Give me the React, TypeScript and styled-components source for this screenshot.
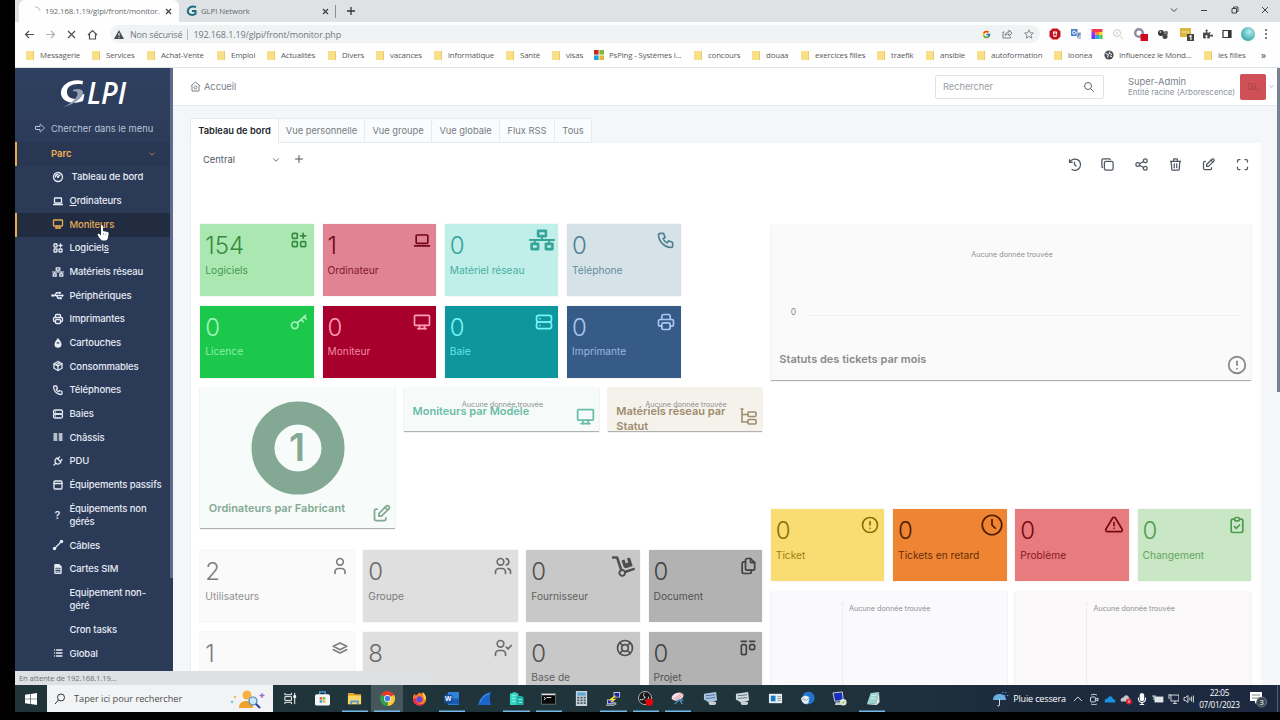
import React from "react";
import styled, { createGlobalStyle } from "styled-components";
import {
  TbAlertCircle,
  TbAlertTriangle,
  TbApps,
  TbArrowBigRight,
  TbChevronDown,
  TbClipboardCheck,
  TbClock,
  TbColumns,
  TbCopy,
  TbDeviceDesktop,
  TbDeviceLaptop,
  TbEdit,
  TbFiles,
  TbGauge,
  TbLayoutKanban,
  TbLayoutNavbar,
  TbLifebuoy,
  TbList,
  TbMaximize,
  TbPackage,
  TbPhone,
  TbPlug,
  TbPlus,
  TbPrinter,
  TbSearch,
  TbServer,
  TbShare,
  TbStack,
  TbTrash,
  TbUser,
  TbUsers,
} from "react-icons/tb";
import { FaDolly, FaNetworkWired, FaPuzzlePiece, FaSimCard, FaMicrophone } from "react-icons/fa";
import { FcGoogle } from "react-icons/fc";

const bookmarks = [
  { label: "Messagerie", w: 66 },
  { label: "Services", w: 55 },
  { label: "Achat-Vente", w: 70 },
  { label: "Emploi", w: 50 },
  { label: "Actualités", w: 61 },
  { label: "Divers", w: 48 },
  { label: "vacances", w: 58 },
  { label: "informatique", w: 72 },
  { label: "Santé", w: 46 },
  { label: "visas", w: 42 },
  { label: "PsPing - Systèmes i...", w: 100, kind: "ms" },
  { label: "concours", w: 58 },
  { label: "douaa", w: 49 },
  { label: "exercices filles", w: 76 },
  { label: "traefik", w: 49 },
  { label: "ansible", w: 51 },
  { label: "autoformation", w: 77 },
  { label: "loonea", w: 50 },
  { label: "Influencez le Mond...", w: 100, kind: "globe" },
  { label: "les filles", w: 57 },
];

const menu = [
  { label: "Tableau de bord", icon: <TbGauge />, wide: true },
  { label: "Ordinateurs", icon: <TbDeviceLaptop />, key: "O" },
  { label: "Moniteurs", icon: <TbDeviceDesktop />, active: true },
  { label: "Logiciels", icon: <TbApps /> },
  { label: "Matériels réseau", icon: <FaNetworkWired /> },
  { label: "Périphériques", icon: <UsbIcon /> },
  { label: "Imprimantes", icon: <TbPrinter /> },
  { label: "Cartouches", icon: <DropIcon /> },
  { label: "Consommables", icon: <TbPackage /> },
  { label: "Téléphones", icon: <TbPhone /> },
  { label: "Baies", icon: <TbServer /> },
  { label: "Châssis", icon: <TbColumns /> },
  { label: "PDU", icon: <TbPlug /> },
  { label: "Équipements passifs", icon: <TbLayoutNavbar /> },
  { label: "Équipements non gérés", icon: <b>?</b>, tall: true },
  { label: "Câbles", icon: <CableIcon /> },
  { label: "Cartes SIM", icon: <FaSimCard size={10} /> },
  { label: "Equipement non-géré", icon: null, tall: true },
  { label: "Cron tasks", icon: null },
  { label: "Global", icon: <TbList /> },
];

const tiles = [
  { n: "154", label: "Logiciels", c: 1, r: 1, w: 3, bg: "#abe8b1", fg: "#358a41", icon: <TbApps /> },
  { n: "1", label: "Ordinateur", c: 4, r: 1, w: 3, bg: "#e08392", fg: "#74061c", icon: <TbDeviceLaptop /> },
  { n: "0", label: "Matériel réseau", c: 7, r: 1, w: 3, bg: "#c0eee8", fg: "#36a597", icon: <FaNetworkWired />, big: 26, dx: 2 },
  { n: "0", label: "Téléphone", c: 10, r: 1, w: 3, bg: "#d5e3e8", fg: "#50808f", icon: <TbPhone /> },
  { n: "0", label: "Licence", c: 1, r: 3, w: 3, bg: "#1bc84c", fg: "#a5f5ba", icon: <KeyIcon /> },
  { n: "0", label: "Moniteur", c: 4, r: 3, w: 3, bg: "#a8002d", fg: "#ff9fb8", icon: <TbDeviceDesktop /> },
  { n: "0", label: "Baie", c: 7, r: 3, w: 3, bg: "#0d969c", fg: "#78f3f7", icon: <TbServer /> },
  { n: "0", label: "Imprimante", c: 10, r: 3, w: 3, bg: "#375b87", fg: "#a7c8f2", icon: <TbPrinter /> },
  { n: "2", label: "Utilisateurs", c: 1, r: 9, w: 4, bg: "#fafafa", fg: "#7d7d7d", icon: <TbUser /> },
  { n: "0", label: "Groupe", c: 5, r: 9, w: 4, bg: "#dfdfdf", fg: "#6b6b6b", icon: <TbUsers /> },
  { n: "0", label: "Fournisseur", c: 9, r: 9, w: 3, bg: "#c8c8c8", fg: "#4f4f4f", icon: <FaDolly />, big: 23, dx: 1.5 },
  { n: "0", label: "Document", c: 12, r: 9, w: 3, bg: "#b2b2b2", fg: "#424242", icon: <TbFiles /> },
  { n: "1", label: "", c: 1, r: 11, w: 4, bg: "#fafafa", fg: "#7d7d7d", icon: <TbStack /> },
  { n: "8", label: "", c: 5, r: 11, w: 4, bg: "#dfdfdf", fg: "#6b6b6b", icon: <UserCheckIcon /> },
  { n: "0", label: "Base de", c: 9, r: 11, w: 3, bg: "#c8c8c8", fg: "#4f4f4f", icon: <TbLifebuoy /> },
  { n: "0", label: "Projet", c: 12, r: 11, w: 3, bg: "#b2b2b2", fg: "#424242", icon: <TbLayoutKanban /> },
  { n: "0", label: "Ticket", c: 15, r: 8, w: 3, bg: "#f9dd73", fg: "#8b7000", icon: <TbAlertCircle /> },
  { n: "0", label: "Tickets en retard", c: 18, r: 8, w: 3, bg: "#ef8433", fg: "#4d1d00", icon: <TbClock />, big: 26 },
  { n: "0", label: "Problème", c: 21, r: 8, w: 3, bg: "#e77b7d", fg: "#760a11", icon: <TbAlertTriangle /> },
  { n: "0", label: "Changement", c: 24, r: 8, w: 3, bg: "#c9e7c5", fg: "#4f9b52", icon: <TbClipboardCheck /> },
];

const tasks = [
  { icon: <TaskView /> },
  { icon: <Store /> },
  { icon: <Explorer />, open: true },
  { icon: <Chrome />, open: true, active: true },
  { icon: <Firefox /> },
  { icon: <Word />, open: true },
  { icon: <Shark /> },
  { icon: <Towers />, open: true },
  { icon: <Cmd />, open: true },
  { icon: <Calc /> },
  { icon: <Putty />, open: true },
  { icon: <Obs />, open: true },
  { icon: <Snip />, open: true },
  { icon: <Monitor fill="#a9c4e0" /> },
  { icon: <Monitor fill="#d3dbd9" /> },
  { icon: <Card /> },
  { icon: <Bird /> },
  { icon: <Remote /> },
  { icon: <Notebook />, open: true },
];

export default function App() {
  return (
    <>
      <GlobalStyle />
      <Screen>
        <Desktop>
          <Browser />
          <Page>
            <Sidebar />
            <Main>
              <TopBar />
              <Dashboard />
            </Main>
            <PageScroll />
            <StatusBubble>En attente de 192.168.1.19...</StatusBubble>
          </Page>
          <Taskbar />
        </Desktop>
      </Screen>
    </>
  );
}

function Browser() {
  return (
    <Chromebar>
      <TabStrip>
        <Tab $active>
          <svg width="12" height="12" viewBox="0 0 12 12" fill="none" stroke="#b4b8bb">
            <path d="M5 2a5 5 0 0 1 5 4" />
          </svg>
          <TabTitle $w={114}>192.168.1.19/glpi/front/monitor.</TabTitle>
          <Cross />
        </Tab>
        <Tab>
          <svg width="12" height="12" viewBox="0 0 12 12" fill="none">
            <path d="M10 2C5 .5 1.500 3 1.800 6.500 2 9.500 6 11 9.500 9V6H6" stroke="#1e6c80" strokeWidth="2" />
          </svg>
          <TabTitle $w={115}>GLPI Network</TabTitle>
          <Cross />
        </Tab>
        <TabLine />
        <svg width="10" height="10" viewBox="0 0 10 10" stroke="#333" strokeWidth="1.300">
          <path d="M5 1v8M1 5h8" />
        </svg>
        <WindowButtons>
          <svg width="8" height="8" viewBox="0 0 8 8"><path d="M1 2.500l3 3 3-3" /></svg>
          <svg width="8" height="8" viewBox="0 0 8 8"><path d="M1 4.500h6" /></svg>
          <svg width="8" height="8" viewBox="0 0 8 8"><path d="M1 2.500h4.500V7H1zM2.500 2.500V1H7v4.500H5.500" /></svg>
          <svg width="8" height="8" viewBox="0 0 8 8"><path d="M1 1l6 6M7 1L1 7" /></svg>
        </WindowButtons>
      </TabStrip>
      <AddressRow>
        <NavButtons>
          <svg width="11" height="11" viewBox="0 0 11 11"><path d="M10 5.500H1.500M5 2L1.500 5.500 5 9" /></svg>
          <svg width="11" height="11" viewBox="0 0 11 11" opacity=".45"><path d="M1 5.500h8.500M6 2l3.500 3.500L6 9" /></svg>
          <svg width="11" height="11" viewBox="0 0 11 11"><path d="M2 2l7 7M9 2L2 9" /></svg>
          <svg width="11" height="11" viewBox="0 0 11 11"><path d="M1 6l4.500-4.500L10 6M2.500 5v5h6V5" /></svg>
        </NavButtons>
        <AddressBar>
          <svg width="10" height="9" viewBox="0 0 10 9"><path d="M5 0l5 9H0z" fill="#4a4d50" /><path d="M5 3v3M5 7v1" stroke="#fff" /></svg>
          <Insecure>Non sécurisé</Insecure>
          <Separator />
          <Url>192.168.1.19/glpi/front/monitor.php</Url>
          <AddressIcons>
            <FcGoogle size={9} />
            <svg width="11" height="10" viewBox="0 0 11 10"><path d="M2.500 3H1v6h7.500V7.500M3 6.500c.5-2.500 2-3.500 4-3.500V1l3 3-3 3V5c-2 0-3 .5-4 1.500z" /></svg>
            <svg width="10" height="10" viewBox="0 0 12 12"><path d="M6 1l1.500 3.500 3.800.3-2.900 2.500.9 3.700L6 9l-3.300 2 .9-3.700L.7 4.800l3.800-.3z" /></svg>
          </AddressIcons>
        </AddressBar>
        <Extensions />
      </AddressRow>
      <BookmarkBar>
        {bookmarks.map((b) => (
          <Bookmark key={b.label} $w={b.w}>
            {b.kind === "ms" ? (
              <svg width="10" height="10" viewBox="0 0 10 10">
                <path d="M0 0h4.600v4.600H0z" fill="#c8271e" /><path d="M5.400 0H10v4.600H5.400z" fill="#7fb93c" />
                <path d="M0 5.400h4.600V10H0z" fill="#23a0d8" /><path d="M5.400 5.400H10V10H5.400z" fill="#e3b93e" />
              </svg>
            ) : b.kind === "globe" ? (
              <svg width="10" height="10" viewBox="0 0 10 10">
                <circle cx="5" cy="5" r="4.600" fill="#4c4f52" />
                <path d="M1.500 3.500l3 1-1 3M6 1.500L5 3l3 1.500M6 6l2 .5" stroke="#fff" fill="none" />
              </svg>
            ) : (
              <Folder />
            )}
            <span>{b.label}</span>
          </Bookmark>
        ))}
        <More>»</More>
      </BookmarkBar>
    </Chromebar>
  );
}

function Extensions() {
  return (
    <ExtensionRow>
      <svg width="12" height="12" viewBox="0 0 12 12">
        <path d="M3.500 .5h5l3 3v5l-3 3h-5l-3-3v-5z" fill="#c3101c" />
        <path d="M4.500 6V3.500M6 6V3M7.500 6V3.500M4.500 6.500a1.500 2 0 0 0 3 0" stroke="#fff" strokeWidth="1.100" fill="none" />
      </svg>
      <svg width="12" height="12" viewBox="0 0 12 12">
        <path d="M1 1h6.500v7H1z" fill="#4b82d6" /><path d="M6 4h5v7H7.500z" fill="#b9c8de" />
        <circle cx="4" cy="4.500" r="1.500" fill="none" stroke="#fff" /><path d="M7.500 6h3M9 6c0 2-1 2.500-2 3" stroke="#476ba5" fill="none" />
      </svg>
      <svg width="12" height="12" viewBox="0 0 12 12">
        <path d="M.5 1h11v3H.5z" fill="#ec3d54" /><path d="M.5 4h4v3h-4z" fill="#b02ee0" /><path d="M4.500 4h4v3h-4z" fill="#ff8a1f" />
        <path d="M8.500 4h3v3h-3z" fill="#f6da20" /><path d="M.5 7h4v4h-4z" fill="#6540e8" /><path d="M4.500 7h4v4h-4z" fill="#28a9e8" /><path d="M8.500 7h3v4h-3z" fill="#4bc94c" />
      </svg>
      <svg width="12" height="12" viewBox="0 0 12 12" fill="none" stroke="#c9cbcc">
        <circle cx="5" cy="5" r="3.500" /><path d="M8 8l3 3M5 3.500v3" />
      </svg>
      <svg width="15" height="14" viewBox="0 0 15 14">
        <circle cx="6" cy="6" r="3.800" fill="none" stroke="#898ba3" strokeWidth="2.400" /><path d="M7.500 7H15v7H7.500z" fill="#d00b20" />
      </svg>
      <svg width="12" height="12" viewBox="0 0 12 12">
        <circle cx="4" cy="5" r="3" fill="#333" /><circle cx="9" cy="5" r="2.200" fill="#777" /><circle cx="8" cy="8.500" r="2.500" fill="#444" /><circle cx="3.500" cy="4" r="1" fill="#bbb" />
      </svg>
      <svg width="15" height="14" viewBox="0 0 15 14">
        <path d="M1 1h11v9H1z" fill="#dcb73f" /><path d="M3 5h7" stroke="#fff" strokeDasharray="1.500 1" /><rect x="8" y="7" width="7" height="7" fill="#444" />
        <text x="11.500" y="13" fontSize="7" fontWeight="700" fill="#fff" textAnchor="middle">1</text>
      </svg>
      <FaPuzzlePiece size={10} color="#4b4e51" />
      <svg width="10" height="10" viewBox="0 0 10 10"><path d="M1 1.500h8v7H1z" fill="none" stroke="#333" strokeWidth="1.200" /><path d="M6 1.500h3v7H6z" fill="#333" /></svg>
      <Profile />
      <svg width="4" height="12" viewBox="0 0 4 12" fill="#4b4e51"><circle cx="2" cy="2" r="1" /><circle cx="2" cy="6" r="1" /><circle cx="2" cy="10" r="1" /></svg>
    </ExtensionRow>
  );
}

function Sidebar() {
  return (
    <Side>
      <SideInner>
        <Logo viewBox="0 0 70 30">
          <path d="M24 2C12-1 1 6 2 15c1 8 12 11 22 7l1.500-7-4 1-1 3.500C14 21 8 19 8 13 8 7 14 4 23.500 5.500z" fill="#fff" />
          <path d="M14 11c5-2 10-1 10 2.500C24 19 15 25 4 28.500 13 24 19 18 18.500 14.500 18.300 12.500 16.500 12 14 12.500z" fill="#93a0b6" />
          <text x="28" y="24.500" textLength="39" lengthAdjust="spacingAndGlyphs">LPI</text>
        </Logo>
        <MenuSearch>
          <TbArrowBigRight size={12} />
          Chercher dans le menu
        </MenuSearch>
        <MenuHead>
          Parc
          <TbChevronDown size={8} />
        </MenuHead>
        {menu.map((m) => (
          <MenuItem key={m.label} $active={m.active} $tall={m.tall}>
            <MenuIcon $wide={m.wide}>{m.icon}</MenuIcon>
            <MenuLabel $wrap={m.tall}>
              {m.key ? <><u>{m.key}</u>{m.label.slice(1)}</> : m.label === "Logiciels" ? <>Logiciel<u>s</u></> : m.label}
            </MenuLabel>
            {m.active && (
              <Pointer viewBox="0 0 12 17">
                <path d="M4 1.500c.8-.8 2 0 2 1V7l4.500 1c1 .3 1.300 1 1.100 2l-.8 4c-.3 1.500-1 2.500-2.500 2.500H5.500C4 16.500 1.500 12.500.8 11c-.6-1.200.8-1.800 1.700-.9L4 11.500z" fill="#fff" />
                <path d="M6.500 9v2M8.500 9.500v2" stroke="#8a93a3" strokeWidth=".6" />
              </Pointer>
            )}
          </MenuItem>
        ))}
      </SideInner>
      <SideScroll />
    </Side>
  );
}

function TopBar() {
  return (
    <Header>
      <Crumb>
        <svg width="11" height="11" viewBox="0 0 11 11" fill="none" stroke="#7b828c">
          <path d="M.8 5l4.700-4 4.700 4M2 4.500V10h7V4.500" />
          <circle cx="5.500" cy="6.500" r="1.500" />
        </svg>
        Accueil
      </Crumb>
      <SearchBox>
        Rechercher
        <TbSearch size={12} />
      </SearchBox>
      <UserInfo>
        <UserName>Super-Admin</UserName>
        <UserEntity>Entité racine (Arborescence)</UserEntity>
      </UserInfo>
      <Avatar>GL</Avatar>
      <TbChevronDown size={7} />
    </Header>
  );
}

function Dashboard() {
  return (
    <Content>
      <Tabs>
        <PageTab $w={89} $active>Tableau de bord</PageTab>
        <PageTab $w={86}>Vue personnelle</PageTab>
        <PageTab $w={67}>Vue groupe</PageTab>
        <PageTab $w={68}>Vue globale</PageTab>
        <PageTab $w={55}>Flux RSS</PageTab>
        <PageTab $w={37}>Tous</PageTab>
      </Tabs>
      <Panel>
        <Toolbar>
          <Select>
            Central
            <TbChevronDown size={10} />
          </Select>
          <TbPlus size={12} />
          <Tools>
            <HistoryIcon />
            <TbCopy />
            <TbShare />
            <TbTrash />
            <TbEdit />
            <TbMaximize />
          </Tools>
        </Toolbar>
        <Grid>
          {tiles.map((t) => (
            <Tile key={t.c + "-" + t.r} $c={t.c} $r={t.r} $w={t.w} $bg={t.bg} $fg={t.fg}>
              <TileNumber>{t.n}</TileNumber>
              <TileLabel>{t.label}</TileLabel>
              <TileIcon $size={t.big || 20} $dx={t.dx || 0}>{t.icon}</TileIcon>
            </Tile>
          ))}
          <Widget $c={15} $r={1} $w={12} $h={156} $bg="#fafafa" $fg="#8a8a8a">
            <NoData $top={26}>Aucune donnée trouvée</NoData>
            <Axis><span>0</span><i /></Axis>
            <WidgetTitle $bottom={13}>Statuts des tickets par mois</WidgetTitle>
            <WidgetIcon $size={22}><TbAlertCircle /></WidgetIcon>
          </Widget>
          <Widget $c={1} $r={5} $w={5} $h={141} $bg="#f7fbf9" $fg="#83a994">
            <Donut viewBox="0 0 94 94">
              <circle cx="47" cy="47" r="35" fill="none" stroke="#83a994" strokeWidth="23" />
              <text x="46" y="60" textAnchor="middle">1</text>
            </Donut>
            <WidgetTitle $bottom={12}>Ordinateurs par Fabricant</WidgetTitle>
            <WidgetIcon $size={21}><TbEdit /></WidgetIcon>
          </Widget>
          <Widget $c={6} $r={5} $w={5} $h={44} $bg="#f6fbf9" $fg="#6abda6">
            <NoData $top={13}>Aucune donnée trouvée</NoData>
            <WidgetTitle $bottom={12.5}>Moniteurs par Modèle</WidgetTitle>
            <WidgetIcon $size={21}><TbDeviceDesktop /></WidgetIcon>
          </Widget>
          <Widget $c={11} $r={5} $w={4} $h={44} $bg="#f5f2ec" $fg="#9d8b6c">
            <NoData $top={13}>Aucune donnée trouvée</NoData>
            <WidgetTitle $bottom={-2.5}>Matériels réseau par Statut</WidgetTitle>
            <WidgetIcon $size={20}>
              <svg width="20" height="20" viewBox="0 0 20 20" fill="none" stroke="currentColor" strokeWidth="1.600">
                <path d="M1.500 2h3M3 2v13h6M3 7.500h6" />
                <rect x="9" y="5" width="8" height="4.500" rx="1" /><rect x="9" y="12.500" width="8" height="4.500" rx="1" />
              </svg>
            </WidgetIcon>
          </Widget>
          <Widget $c={15} $r={10} $w={6} $h={140} $bg="#fafafc" $fg="#8a8a8a">
            <NoData $top={13}>Aucune donnée trouvée</NoData>
            <DottedLine />
          </Widget>
          <Widget $c={21} $r={10} $w={6} $h={140} $bg="#faf8f9" $fg="#8a8a8a">
            <NoData $top={13}>Aucune donnée trouvée</NoData>
            <DottedLine />
          </Widget>
        </Grid>
      </Panel>
    </Content>
  );
}

function Taskbar() {
  return (
    <Bar>
      <Start>
        <svg width="12" height="12" viewBox="0 0 12 12" fill="#fff"><path d="M0 1.700l5-.7v4.700H0zM5.600.9L12 0v5.700H5.600zM0 6.300h5V11l-5-.7zM5.600 6.300H12V12l-6.400-.9z" /></svg>
      </Start>
      <TaskSearch>
        <svg width="12" height="12" viewBox="0 0 12 12" fill="none" stroke="#333"><circle cx="7" cy="4.500" r="3.500" /><path d="M4.500 7L1 11" /></svg>
        Taper ici pour rechercher
        <svg width="36" height="20" viewBox="0 0 36 20">
          <path d="M9 19c0-5 3-7 7-7s7 2 7 7z" fill="#f0a12c" /><circle cx="17" cy="6" r="4.500" fill="#f5b041" />
          <circle cx="23" cy="12" r="4" fill="#c7e8fb" stroke="#4a86c5" strokeWidth="1.200" /><path d="M26 15l4 4" stroke="#2b3f9c" strokeWidth="2" />
          <path d="M32 4v5M29.500 6.500h5" stroke="#9b6bd6" strokeWidth="1.300" /><circle cx="5" cy="8" r="1" fill="#f0a12c" /><circle cx="2" cy="13" r="1.300" fill="#60c5f0" />
        </svg>
      </TaskSearch>
      <TaskList>
        {tasks.map((t, i) => (
          <Task key={i} $open={t.open} $active={t.active}>{t.icon}</Task>
        ))}
      </TaskList>
      <Tray>
        <svg width="17" height="16" viewBox="0 0 17 16">
          <path d="M1 9c0-4 3-6 6.500-6S14 5 14 9z" fill="#6aaee0" /><path d="M7.500 8v6c0 1.500-2 1.500-2 0" stroke="#d0dde6" fill="none" />
          <path d="M11 1l-.5 1M14 1l-.5 1M13 4l-.5 1M16 4l-.5 1" stroke="#57a8ef" strokeWidth="1.200" />
        </svg>
        <Weather>Pluie cessera</Weather>
        <TrayIcons>
          <svg viewBox="0 0 12 12"><path d="M2 8l4-4 4 4" /></svg>
          <svg viewBox="0 0 12 12"><rect x="2.500" y="4" width="5" height="5" rx="1" /><path d="M8 6l2-1v3L8 7M3 2c2-1 4-1 6 0M3 11c2 1 4 1 6 0" /></svg>
          <svg viewBox="0 0 12 12"><path d="M1 9.500c-1-3 1-4 2.500-4C5 2 9 3 9 6c3 0 3 3 2 3.500z" fill="#1c8fdf" stroke="none" /></svg>
          <svg viewBox="0 0 12 12"><path d="M1 8.500c-1-3 1-4 2.500-4C5 1 9 2 9 5c2 0 2 3 1 3.500z" fill="#c5c9cd" stroke="none" /><circle cx="9" cy="8.500" r="3" fill="#d92532" stroke="none" /><path d="M8 7.500l2 2M10 7.500l-2 2" strokeWidth=".7" /></svg>
          <FaMicrophone />
          <svg viewBox="0 0 12 12"><rect x="3" y="4" width="8" height="5" fill="#dfe4e8" /><path d="M0 3h4M2 3v4" /></svg>
          <svg viewBox="0 0 12 12"><rect x="3" y="2" width="8" height="6" /><path d="M7 8v2M5 10.500h4M1 1v5M1 2h2" /></svg>
          <svg viewBox="0 0 12 12"><path d="M1 4.500h1.500L5 2.500v7L2.500 7.500H1zM7 4.500v3M8.700 3.500v5M10.500 2.500v7" /></svg>
        </TrayIcons>
        <Clock>
          <span>22:05</span>
          <span>07/01/2023</span>
        </Clock>
        <Notif>
          <svg width="18" height="18" viewBox="0 0 18 18">
            <path d="M1 2h12v9H8l-2 3v-3H1z" fill="#fff" /><path d="M3 5h8M3 8h8" stroke="#7b8894" />
            <circle cx="12.500" cy="12" r="5" fill="#3b4752" stroke="#9da6ad" strokeWidth=".6" />
            <text x="12.500" y="15" fontSize="8" fill="#fff" textAnchor="middle">3</text>
          </svg>
        </Notif>
        <ShowDesktop />
      </Tray>
    </Bar>
  );
}

function Cross() {
  return <svg width="7" height="7" viewBox="0 0 7 7" stroke="#3b3e41" strokeWidth="1.200"><path d="M1 1l5 5M6 1L1 6" /></svg>;
}

function UsbIcon() {
  return (
    <svg width="13" height="13" viewBox="0 0 24 24">
      <path d="M3 12h18M7 12l3-5h4M10 12l3 5h4" fill="none" stroke="currentColor" />
      <circle cx="3" cy="12" r="2.500" fill="currentColor" />
      <path d="M20 9l4 3-4 3zM14 5h4v4h-4zM16 15h4v4h-4z" fill="currentColor" />
    </svg>
  );
}

function DropIcon() {
  return (
    <svg width="12" height="12" viewBox="0 0 24 24">
      <path d="M12 2c-4 5-7 8-7 12.500a7 7 0 0 0 14 0C19 10 16 7 12 2z" fill="currentColor" />
      <path d="M9 13a3 3 0 0 1 6 0z" fill="#2b3a56" />
    </svg>
  );
}

function CableIcon() {
  return (
    <svg width="12" height="12" viewBox="0 0 24 24" fill="currentColor">
      <circle cx="5" cy="19" r="3.500" /><circle cx="19" cy="5" r="3.500" />
      <path d="M5 19L19 5" stroke="currentColor" />
    </svg>
  );
}

function HistoryIcon() {
  return (
    <svg width="15" height="15" viewBox="0 0 24 24" fill="none" stroke="currentColor" strokeWidth="2" strokeLinecap="round" strokeLinejoin="round">
      <path d="M4 4v4.500h4.500M4.500 8.500A9 9 0 1 1 8 20M12 8v4l2.500 2.500" />
    </svg>
  );
}

function KeyIcon() {
  return (
    <svg width="20" height="20" viewBox="0 0 24 24" fill="none" stroke="currentColor" strokeWidth="2" strokeLinecap="round" strokeLinejoin="round">
      <circle cx="7" cy="16" r="4" />
      <path d="M10 13L20 4M18 5.800l2.500 2.500M14.500 9l2.500 2.500" />
    </svg>
  );
}

function UserCheckIcon() {
  return (
    <svg width="20" height="20" viewBox="0 0 24 24" fill="none" stroke="currentColor" strokeWidth="2" strokeLinecap="round" strokeLinejoin="round">
      <circle cx="9" cy="7" r="4" />
      <path d="M3 21v-2a4 4 0 0 1 4-4h4a4 4 0 0 1 4 4v2M16 11l2 2 4-4" />
    </svg>
  );
}

function TaskView() {
  return <svg viewBox="0 0 16 16" fill="none" stroke="#fff"><path d="M2 2v2h7V2M2 14v-2h7v2M2 6h7v4H2zM12.500 2v12" /><path d="M11.500 5h2v2h-2z" fill="#fff" /></svg>;
}
function Store() {
  return (
    <svg viewBox="0 0 16 16">
      <path d="M5 4V1h6v3" fill="none" stroke="#4ba9e8" strokeWidth="1.300" /><rect y="3.500" width="16" height="12" rx="2" fill="#f3f5f6" />
      <path d="M5 6.500h2.700v2.700H5z" fill="#e35b32" /><path d="M8.300 6.500H11v2.700H8.300z" fill="#78b63b" /><path d="M5 9.800h2.700v2.700H5z" fill="#2fa2df" /><path d="M8.300 9.800H11v2.700H8.300z" fill="#efb52e" />
    </svg>
  );
}
function Explorer() {
  return <svg viewBox="0 0 16 16"><path d="M1 2h6l1.500 1.500H15V14H1z" fill="#e2a32c" /><path d="M1 5h14v9H1z" fill="#fbd568" /><path d="M3.500 14v-4h9v4h-2v-2h-5v2z" fill="#4d9ed8" /></svg>;
}
function Chrome() {
  return (
    <svg viewBox="0 0 16 16">
      <path d="M8 8L1.070 4A8 8 0 0 1 14.930 4z" fill="#e33b2e" /><path d="M8 8l6.930-4A8 8 0 0 1 8 16z" fill="#fcc934" /><path d="M8 8v8A8 8 0 0 1 1.070 4z" fill="#2da14c" />
      <circle cx="8" cy="8" r="3.800" fill="#fff" /><circle cx="8" cy="8" r="3" fill="#3f7fe8" />
    </svg>
  );
}
function Firefox() {
  return (
    <svg viewBox="0 0 16 16">
      <path d="M8 15.500A7 7 0 0 1 1 8c0-2 .8-4 2-5l1 2 4-3.500C9 3 10 3 11 2c3 2 4 4 4 6.500a7 7 0 0 1-7 7z" fill="#ff7a22" />
      <path d="M11 1c3 2 4.500 5 3.500 9-2-1-2.500-5-3.500-9z" fill="#ffd43b" /><circle cx="8" cy="9" r="3.300" fill="#6c45d8" /><path d="M1 8c0 5 4 7.500 7 7.500 2 0 4-1 5-2-6 1.500-9-1-9-6z" fill="#ec2d55" />
    </svg>
  );
}
function Word() {
  return <svg viewBox="0 0 16 16"><rect x="4" y="1" width="12" height="14" rx="1" fill="#2f83d8" /><path d="M4 8h12v6H4z" fill="#1c5bb5" /><rect y="4" width="9" height="8.500" rx="1" fill="#164da3" /><text x="4.500" y="10.800" fontSize="7" fontWeight="700" fill="#fff" textAnchor="middle">W</text></svg>;
}
function Shark() {
  return <svg viewBox="0 0 16 16"><path d="M1 15C3 7 8 2 15 1c-2 5-1.500 9 0 14z" fill="#1d65cc" /><path d="M3 12C6 6 9 4 13 3" stroke="#5f9ff0" fill="none" /></svg>;
}
function Towers() {
  return <svg viewBox="0 0 16 16"><path d="M1 3l5-2 4 2v12H1z" fill="#35d4c3" /><path d="M8 6l4-1 3.500 1.500V15H8z" fill="#1fb3a6" /><path d="M3 5h4M3 8h4M3 11h4M10 9h4M10 12h4" stroke="#b6fff4" strokeWidth=".8" /></svg>;
}
function Cmd() {
  return <svg viewBox="0 0 16 16"><rect x=".5" y="2.500" width="15" height="11.500" fill="#070707" stroke="#8b8f91" strokeWidth=".7" /><path d="M1 3h14v1.500H1z" fill="#dfe3e5" /><path d="M3 6.500l2 1.500-2 1.500M6 7h5" stroke="#eee" fill="none" /></svg>;
}
function Calc() {
  return <svg viewBox="0 0 16 16"><rect x="2" y="0" width="12" height="16" fill="#c9d4dc" /><path d="M3.500 1.500h9V5h-9z" fill="#5daad6" /><path d="M3.500 7h9M3.500 10h9M3.500 13h9" stroke="#4c5a66" strokeWidth="1.800" strokeDasharray="2.200 1.200" /></svg>;
}
function Putty() {
  return <svg viewBox="0 0 16 16"><path d="M8 1h7v6H8zM1 9h7v5H1z" fill="#c4cbd0" /><path d="M9 2h5v4H9zM2 10h5v3H2z" fill="#1c1fb5" /><path d="M7 15h4v-3H8zM0 14.500h9V16H0z" fill="#9aa2a6" /><path d="M10 5L5 9h4l-4 3" stroke="#ffe22e" strokeWidth="1.400" fill="none" /></svg>;
}
function Obs() {
  return <svg viewBox="0 0 16 16"><circle cx="7.500" cy="7.500" r="7" fill="#171717" stroke="#b7b7b7" /><path d="M7 2c-2 2-1 4 1 5M2 9c3 1 5 0 5-3M11 6c1 2-1 4-3 4" stroke="#ddd" fill="none" /><circle cx="12" cy="12" r="4" fill="#e3060f" /></svg>;
}
function Snip() {
  return <svg viewBox="0 0 16 16"><ellipse cx="7" cy="6" rx="6.500" ry="4" fill="#f3dfe3" transform="rotate(-18 7 6)" /><path d="M3 9L12 2M5 10l8-6" stroke="#d96d7d" strokeWidth=".7" /><path d="M9 9l-5 5M9 9l3 5M13 9l-3 2" stroke="#4a8fc2" strokeWidth="1.500" /></svg>;
}
function Monitor({ fill }: { fill: string }) {
  return <svg viewBox="0 0 16 16"><path d="M1 3l13-2 1 9-9 2-5-3z" fill={fill} /><path d="M3 5l10-1M3 8l10-1" stroke="#52718f" /><ellipse cx="10" cy="13" rx="4" ry="2" fill="#c8d0d4" /></svg>;
}
function Card() {
  return <svg viewBox="0 0 16 16"><rect x="1" y="3" width="14" height="10" fill="#e9eef1" /><path d="M3 5h5v6H3z" fill="#1878c9" /><path d="M10 6h4M10 8h4M10 10h4" stroke="#8b9ba6" /></svg>;
}
function Bird() {
  return <svg viewBox="0 0 16 16"><path d="M3 4c3-5 12-4 12.500 3 .5 7-8 9-12 6z" fill="#2376cf" /><path d="M1 8c2-3 6-4 9-1l-1 6c-4 2-7 0-8-5z" fill="#e5edf3" /><path d="M2 8l5 2 3-3" stroke="#8ba5ba" fill="none" /></svg>;
}
function Remote() {
  return <svg viewBox="0 0 16 16"><path d="M1 2l10-1 1 9-9 1z" fill="#1a2fbd" stroke="#ccd3d8" /><path d="M4 12h6l2 3H3z" fill="#c5cbd0" /><circle cx="12" cy="12" r="3.500" fill="#e1ead6" /><path d="M10.500 12l1 1 2-2" stroke="#7f9d35" fill="none" /></svg>;
}
function Notebook() {
  return <svg viewBox="0 0 16 16"><path d="M6 2l9-1-3 12-10 1z" fill="#9bd4d0" /><path d="M2 14l10-1 3-12 .5 11-3 3z" fill="#e6ecec" /><path d="M7 5l5-.5M6 8l5-.5" stroke="#d9f2f0" /></svg>;
}

const GlobalStyle = createGlobalStyle`
  * {
    box-sizing: border-box;
  }
  body {
    margin: 0;
    background: #000;
    overflow: hidden;
  }
  svg {
    flex-shrink: 0;
  }
`;

const Screen = styled.div`
  width: 1280px;
  height: 720px;
  padding: 0 0 8px 15px;
  background: #000;
`;

const Desktop = styled.div`
  height: 712px;
  display: flex;
  flex-direction: column;
  overflow: hidden;
`;

const Chromebar = styled.div`
  height: 68px;
  flex-shrink: 0;
  font-family: "Open Sans", sans-serif;
  background: #fefefe;
  border-bottom: 1px solid #dfe2e3;
`;

const TabStrip = styled.div`
  height: 22px;
  display: flex;
  align-items: center;
  padding-left: 4px;
  background: #dee2e5;
`;

const Tab = styled.div<{ $active?: boolean }>`
  width: ${(p) => (p.$active ? 160 : 156)}px;
  height: 22px;
  display: flex;
  align-items: center;
  padding-left: ${(p) => (p.$active ? 11 : 7)}px;
  border-radius: 6px 6px 0 0;
  background: ${(p) => (p.$active ? "#fefefe" : "transparent")};
`;

const TabTitle = styled.span<{ $w: number }>`
  width: ${(p) => p.$w}px;
  margin: 0 6px 0 3px;
  white-space: nowrap;
  font-size: 7.800px;
  letter-spacing: -0.080px;
  color: #65696d;
`;

const TabLine = styled.div`
  width: 1px;
  height: 13px;
  margin-right: 10px;
  background: #8b8f92;
`;

const WindowButtons = styled.div`
  display: flex;
  gap: 22.500px;
  margin: -3px 11px 0 auto;
  fill: none;
  stroke: #404346;
  svg {
    display: block;
  }
`;

const AddressRow = styled.div`
  height: 22px;
  display: flex;
  align-items: center;
  padding: 2px 0 0 9px;
`;

const NavButtons = styled.div`
  width: 86px;
  display: flex;
  gap: 10px;
  fill: none;
  stroke: #4c5053;
  stroke-width: 1.200;
`;

const AddressBar = styled.div`
  width: 930px;
  height: 18px;
  display: flex;
  align-items: center;
  padding: 0 6px 0 4px;
  border-radius: 9px;
  background: #f0f3f4;
  font-size: 9px;
`;

const Insecure = styled.span`
  width: 56.500px;
  margin-left: 6px;
  letter-spacing: -0.180px;
  color: #74787b;
  white-space: nowrap;
`;

const Separator = styled.div`
  width: 1px;
  height: 11px;
  margin-right: 6px;
  background: #b7bbbd;
`;

const Url = styled.span`
  color: #73777a;
  letter-spacing: -0.120px;
`;

const AddressIcons = styled.div`
  display: flex;
  align-items: center;
  gap: 11px;
  margin-left: auto;
  fill: none;
  stroke: #5b5f62;
  stroke-width: 0.800;
  svg:first-child {
    stroke: none;
  }
`;

const ExtensionRow = styled.div`
  flex: 1;
  display: flex;
  align-items: center;
  justify-content: space-between;
  padding: 0 12px 0 9px;
`;

const Profile = styled.div`
  width: 14px;
  height: 14px;
  border-radius: 50%;
  background: radial-gradient(circle at 60% 35%, #b9eeee, #4fb5b8 60%, #2a858c);
`;

const BookmarkBar = styled.div`
  height: 22px;
  display: flex;
  align-items: center;
  padding-left: 11px;
`;

const Bookmark = styled.div<{ $w: number }>`
  width: ${(p) => p.$w}px;
  flex-shrink: 0;
  display: flex;
  align-items: center;
  gap: 5px;
  font-size: 7.800px;
  letter-spacing: -0.120px;
  color: #56595c;
  white-space: nowrap;
`;

const Folder = styled.i`
  width: 8px;
  height: 9px;
  background: #f9df88;
  border-right: 1px solid #ecca66;
  margin-right: 1px;
`;

const More = styled.span`
  font-size: 10px;
  color: #444;
`;

const Page = styled.div`
  position: relative;
  height: 617px;
  flex-shrink: 0;
  display: flex;
  overflow: hidden;
  background: #f4f6fa;
  font-family: Inter, sans-serif;
`;

const Side = styled.div`
  width: 158px;
  flex-shrink: 0;
  display: flex;
  background: linear-gradient(#2f4060, #2b3a57 90px);
`;

const SideInner = styled.div`
  width: 155px;
`;

const SideScroll = styled.div`
  width: 3px;
  height: 510px;
  background: #5d6c8c;
`;

const Logo = styled.svg`
  display: block;
  width: 70px;
  height: 30px;
  margin: 11px 0 0 43.500px;
  text {
    font: italic 600 31px "Open Sans", sans-serif;
    fill: #fff;
  }
`;

const MenuSearch = styled.div`
  height: 32.500px;
  display: flex;
  align-items: center;
  gap: 5px;
  padding: 6px 0 0 19px;
  font-size: 9.300px;
  color: #b9c4d8;
  white-space: nowrap;
`;

const MenuHead = styled.div`
  height: 24px;
  display: flex;
  align-items: center;
  justify-content: space-between;
  padding: 0 14px 0 34px;
  border-left: 2px solid #eda942;
  background: #293752;
  font-size: 9.500px;
  font-weight: 600;
  color: #f0b052;
`;

const MenuItem = styled.div<{ $active?: boolean; $tall?: boolean }>`
  position: relative;
  height: ${(p) => (p.$tall ? 36.8 : 23.7)}px;
  display: flex;
  align-items: center;
  padding: 0 0 1px 34px;
  border-left: 2px solid ${(p) => (p.$active ? "#eda942" : "transparent")};
  background: ${(p) => (p.$active ? "#212c41" : "transparent")};
  color: ${(p) => (p.$active ? "#e5aa55" : "#e6ebf5")};
`;

const MenuIcon = styled.span<{ $wide?: boolean }>`
  width: 13px;
  margin-right: ${(p) => (p.$wide ? 7.5 : 5.5)}px;
  display: flex;
  justify-content: center;
  font-size: 12px;
  svg {
    stroke-width: 2.600;
  }
  b {
    font-size: 10px;
    font-weight: 600;
  }
`;

const MenuLabel = styled.span<{ $wrap?: boolean }>`
  width: 90px;
  font-size: 9.500px;
  font-weight: 500;
  line-height: 13.200px;
  letter-spacing: -0.120px;
  white-space: ${(p) => (p.$wrap ? "normal" : "nowrap")};
`;

const Pointer = styled.svg`
  position: absolute;
  left: 80px;
  top: 11px;
  width: 12px;
  height: 17px;
  z-index: 2;
`;

const Main = styled.div`
  width: 1104px;
  display: flex;
  flex-direction: column;
`;

const Header = styled.div`
  height: 38px;
  flex-shrink: 0;
  display: flex;
  align-items: center;
  padding-left: 17px;
  background: #fff;
  border-bottom: 1px solid #e6eaee;
  color: #7b828c;
`;

const Crumb = styled.div`
  width: 745px;
  display: flex;
  align-items: center;
  gap: 3px;
  font-size: 9.300px;
  letter-spacing: -0.050px;
`;

const SearchBox = styled.div`
  width: 169px;
  height: 24px;
  display: flex;
  align-items: center;
  justify-content: space-between;
  padding: 0 8px 0 7px;
  border: 1px solid #dfe2e6;
  border-radius: 2px;
  font-size: 9.300px;
  letter-spacing: -0.050px;
  color: #9a9fa6;
  svg {
    color: #5f6670;
  }
`;

const UserInfo = styled.div`
  width: 112px;
  margin-left: 24px;
  white-space: nowrap;
`;

const UserName = styled.div`
  font-size: 9.400px;
  line-height: 11px;
`;

const UserEntity = styled.div`
  font-size: 8px;
  line-height: 11px;
  letter-spacing: -0.040px;
  color: #8d939b;
`;

const Avatar = styled.div`
  width: 26px;
  height: 26px;
  margin-right: 2px;
  border-radius: 2px;
  background: #d05058;
  color: #a84049;
  font-size: 9px;
  line-height: 26px;
  text-align: center;
`;

const PageScroll = styled.div`
  width: 3px;
  height: 324px;
  background: #79828f;
`;

const Content = styled.div`
  padding: 12px 0 0 17px;
`;

const Tabs = styled.div`
  display: flex;
  height: 25px;
`;

const PageTab = styled.div<{ $w: number; $active?: boolean }>`
  width: ${(p) => p.$w}px;
  height: ${(p) => (p.$active ? 26 : 25)}px;
  border: 1px solid #e8eaee;
  border-left-width: ${(p) => (p.$active ? 1 : 0)}px;
  border-bottom-color: ${(p) => (p.$active ? "#fff" : "#e8eaee")};
  background: ${(p) => (p.$active ? "#fff" : "#fafbfc")};
  color: ${(p) => (p.$active ? "#23272e" : "#757b84")};
  font-size: 9.300px;
  font-weight: ${(p) => (p.$active ? 600 : 400)};
  line-height: 23px;
  text-align: center;
  white-space: nowrap;
`;

const Panel = styled.div`
  width: 1071px;
  height: 600px;
  padding: 0 0 0 10px;
  background: #fff;
  border-left: 1px solid #e9ecf0;
`;

const Toolbar = styled.div`
  height: 81px;
  display: flex;
  align-items: flex-start;
  padding: 10px 11px 0 2px;
  color: #4f5763;
`;

const Select = styled.div`
  width: 78px;
  height: 13px;
  display: flex;
  align-items: center;
  justify-content: space-between;
  margin-right: 12px;
  font-size: 9.400px;
`;

const Tools = styled.div`
  display: flex;
  gap: 18.700px;
  margin: 4px 0 0 auto;
  font-size: 15px;
`;

const Grid = styled.div`
  margin-left: -0.700px;
  display: grid;
  grid-template-columns: repeat(26, 32px);
  grid-auto-rows: 32px;
  gap: 8.750px;
`;

const Tile = styled.div<{ $c: number; $r: number; $w: number; $bg: string; $fg: string }>`
  position: relative;
  grid-column: ${(p) => p.$c} / span ${(p) => p.$w};
  grid-row: ${(p) => p.$r} / span 2;
  height: 72px;
  padding: 9px 5px;
  background: ${(p) => p.$bg};
  color: ${(p) => p.$fg};
  box-shadow: 0 0 1px rgba(35, 46, 60, 0.2);
`;

const TileNumber = styled.div`
  font-size: 24px;
  font-weight: 300;
  line-height: 25px;
`;

const TileLabel = styled.div`
  margin-top: 4.500px;
  font-size: 10.200px;
  line-height: 14px;
  opacity: 0.85;
`;

const TileIcon = styled.span<{ $size: number; $dx: number }>`
  position: absolute;
  top: ${(p) => 16 - p.$size / 2}px;
  right: ${(p) => 14.5 + p.$dx - p.$size / 2}px;
  font-size: ${(p) => p.$size}px;
  line-height: 0;
  svg {
    stroke-width: ${(p) => (p.$size > 25 && p.$dx === 0 ? 1.6 : undefined)};
  }
`;

const Widget = styled.div<{ $c: number; $r: number; $w: number; $h: number; $bg: string; $fg: string }>`
  position: relative;
  grid-column: ${(p) => p.$c} / span ${(p) => p.$w};
  grid-row: ${(p) => p.$r};
  height: ${(p) => p.$h}px;
  background: ${(p) => p.$bg};
  color: ${(p) => p.$fg};
  box-shadow: 0 1px 1px rgba(0, 0, 0, 0.3);
`;

const WidgetTitle = styled.div<{ $bottom: number }>`
  position: absolute;
  left: 8.500px;
  bottom: ${(p) => p.$bottom}px;
  max-width: calc(100% - 36px);
  font-size: 11px;
  font-weight: 600;
  line-height: 15px;
`;

const WidgetIcon = styled.span<{ $size: number }>`
  position: absolute;
  right: 3.500px;
  bottom: 4.500px;
  font-size: ${(p) => p.$size}px;
  line-height: 0;
`;

const NoData = styled.div<{ $top: number }>`
  padding: ${(p) => p.$top}px 0 0 2px;
  font-size: 7.200px;
  line-height: 9px;
  text-align: center;
  color: #8d9092;
`;

const Axis = styled.div`
  display: flex;
  align-items: center;
  margin: 48px 12px 0 20px;
  font-size: 8.500px;
  i {
    flex: 1;
    margin: 7px 0 0 12px;
    border-top: 1px dotted #e8e8e8;
  }
`;

const DottedLine = styled.div`
  height: 84px;
  margin: -10px 0 0 71px;
  border-left: 1px dotted #e1e1e3;
`;

const Donut = styled.svg`
  display: block;
  width: 94px;
  height: 108px;
  padding-top: 14px;
  margin-left: 51px;
  text {
    font: 600 38px Inter, sans-serif;
    fill: #83a994;
  }
`;

const StatusBubble = styled.div`
  position: absolute;
  left: 0;
  bottom: 0;
  width: 417px;
  height: 14px;
  padding-left: 4px;
  background: #dee1e4;
  color: #6c7073;
  font: 7.600px/14px "Open Sans", sans-serif;
  letter-spacing: -0.100px;
`;

const Bar = styled.div`
  height: 27px;
  flex-shrink: 0;
  display: flex;
  background: linear-gradient(90deg, #20343a, #1f343b 60%, #1d2b3e 80%, #1c2940);
  font-family: "Open Sans", sans-serif;
`;

const Start = styled.div`
  width: 32px;
  flex-shrink: 0;
  display: flex;
  align-items: center;
  justify-content: center;
`;

const TaskSearch = styled.div`
  width: 226px;
  flex-shrink: 0;
  display: flex;
  align-items: center;
  gap: 8px;
  padding: 0 7px;
  background: #f2f3f4;
  font-size: 9.200px;
  color: #4d5052;
  white-space: nowrap;
  svg:last-child {
    margin-left: auto;
  }
`;

const TaskList = styled.div`
  display: flex;
  flex-shrink: 0;
  padding-left: 1px;
`;

const Task = styled.div<{ $open?: boolean; $active?: boolean }>`
  width: 32.330px;
  display: flex;
  align-items: center;
  justify-content: center;
  border-left: 3px solid transparent;
  border-right: 3px solid transparent;
  background: ${(p) => (p.$active ? "#46575c" : "transparent")};
  box-shadow: ${(p) => (p.$open ? "inset 0 -1.500px #76b9e8" : "none")};
  svg {
    width: 15px;
    height: 15px;
  }
`;

const Tray = styled.div`
  flex: 1;
  display: flex;
  align-items: center;
  padding-left: 104px;
  color: #fff;
`;

const Weather = styled.span`
  width: 59px;
  margin-left: 4px;
  font-size: 9px;
  letter-spacing: -0.150px;
  white-space: nowrap;
`;

const TrayIcons = styled.div`
  display: flex;
  gap: 4px;
  fill: none;
  stroke: #e8ecef;
  stroke-width: 0.900;
  svg {
    width: 11.900px;
    height: 12px;
  }
`;

const Clock = styled.div`
  width: 48px;
  display: flex;
  flex-direction: column;
  align-items: center;
  font-size: 8.200px;
  line-height: 11.500px;
  letter-spacing: -0.300px;
`;

const Notif = styled.div`
  width: 18px;
  height: 18px;
  margin-left: 6px;
`;

const ShowDesktop = styled.div`
  width: 1px;
  height: 27px;
  margin-left: auto;
  margin-right: 2px;
  background: #57606b;
`;
